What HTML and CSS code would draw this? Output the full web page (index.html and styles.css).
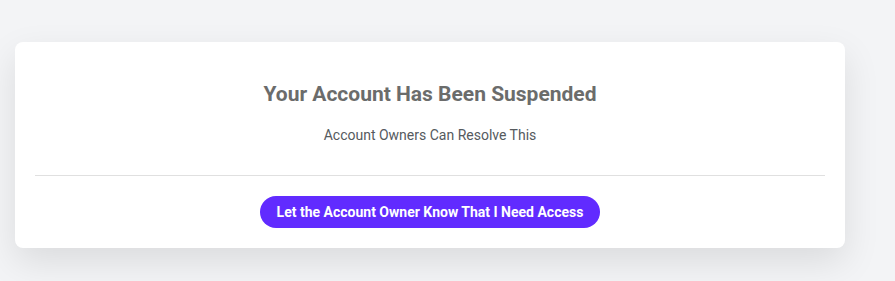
FILE: index.html
```html
<!DOCTYPE html>
<html lang="en">
<head>
<meta charset="utf-8">
<title>Account Suspended</title>
<link rel="stylesheet" href="styles.css">
</head>
<body>
<main class="page">
  <section class="card">
    <h1 class="card-title">Your Account Has Been Suspended</h1>
    <p class="card-subtitle">Account Owners Can Resolve This</p>
    <hr class="card-divider">
    <div class="card-actions">
      <button class="btn-primary" type="button">Let the Account Owner Know That I Need Access</button>
    </div>
  </section>
</main>
</body>
</html>
```

FILE: styles.css
```css
* { box-sizing: border-box; }
html, body {
  margin: 0;
  padding: 0;
  background: #f3f4f6;
  font-family: Roboto, "Liberation Sans", Arial, sans-serif;
}
.page {
  min-height: 100vh;
  padding: 42px 50px 40px 15px;
}
.card {
  width: 830px;
  background: #ffffff;
  border-radius: 8px;
  padding: 40px 20px 20px;
  box-shadow: 0 14px 36px rgba(0, 0, 0, 0.1);
  text-align: center;
}
.card-title {
  margin: 0;
  font-size: 21px;
  line-height: 24px;
  font-weight: 700;
  color: #6b6c6b;
}
.card-subtitle {
  margin: 19px 0 0;
  font-size: 14px;
  line-height: 20px;
  color: #555a5e;
}
.card-divider {
  margin: 30px 0 0;
  border: 0;
  height: 1px;
  background: #e0e0e0;
}
.card-actions {
  margin-top: 20px;
  display: flex;
  justify-content: center;
}
.btn-primary {
  height: 32px;
  padding: 0 17px;
  border: 0;
  border-radius: 16px;
  background: #612bff;
  color: #ffffff;
  font-family: Roboto, "Liberation Sans", Arial, sans-serif;
  font-size: 14px;
  font-weight: 700;
  cursor: pointer;
}
```
